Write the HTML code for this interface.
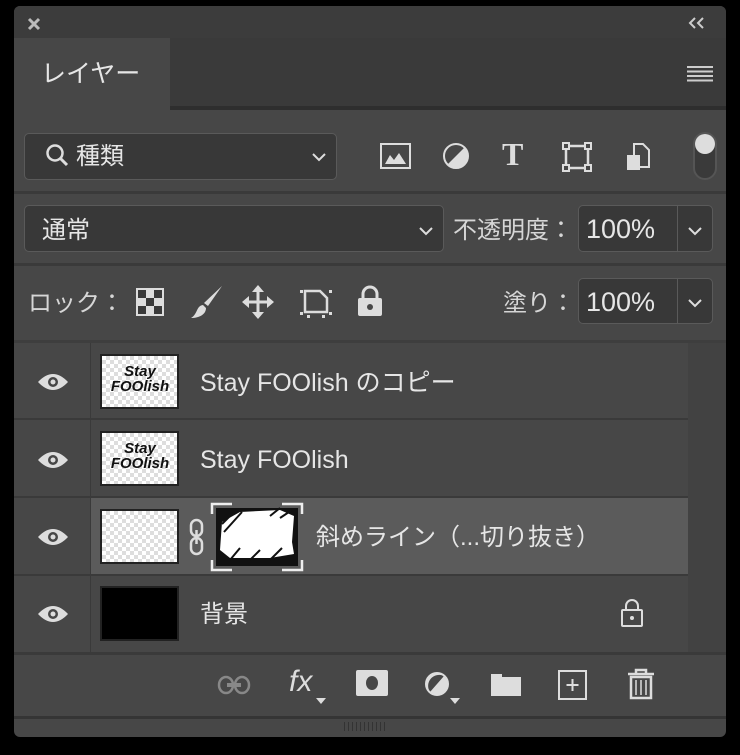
<!DOCTYPE html>
<html><head><meta charset="utf-8"><style>
*{margin:0;padding:0;box-sizing:border-box}
body{width:740px;height:755px;background:#000;position:relative;overflow:hidden;font-family:"Liberation Sans","Noto Sans CJK JP",sans-serif;color:#e6e6e6}
.a{position:absolute}
.box{position:absolute;background:#383838;border:1px solid #5a5a5a;border-radius:5px}
.chk{background-color:#fff;background-image:linear-gradient(45deg,#ddd 25%,transparent 25%,transparent 75%,#ddd 75%),linear-gradient(45deg,#ddd 25%,transparent 25%,transparent 75%,#ddd 75%);background-size:8px 8px;background-position:0 0,4px 4px}
.t{font-size:24px;white-space:nowrap;line-height:1.2}
svg{position:absolute;overflow:visible}
</style></head><body>
<div class="a" style="left:14px;top:6px;width:712px;height:731px;background:#474747;border-radius:6px"></div>
<div class="a" style="left:14px;top:6px;width:712px;height:32px;background:#3c3c3c;border-radius:6px 6px 0 0"></div>
<div class="a" style="left:14px;top:38px;width:712px;height:70px;background:#3a3a3a"></div>
<div class="a" style="left:170px;top:106px;width:556px;height:4px;background:#2e2e2e"></div>
<div class="a" style="left:14px;top:38px;width:156px;height:72px;background:#474747"></div>
<div class="a t" style="left:41px;top:59px;font-size:25px">レイヤー</div>
<svg style="left:27px;top:17px" width="14" height="14"><path d="M2 2L12 12M12 2L2 12" stroke="#bbb" stroke-width="3"/></svg>
<svg style="left:688px;top:17px" width="22" height="12"><path d="M7 1L2 6L7 11M15 1L10 6L15 11" stroke="#ccc" stroke-width="2" fill="none"/></svg>
<svg style="left:687px;top:66px" width="26" height="16"><path d="M0 1H26M0 5.5H26M0 10H26M0 14.5H26" stroke="#ccc" stroke-width="2"/></svg>
<div class="box" style="left:24px;top:133px;width:313px;height:47px"></div>
<svg style="left:45px;top:143px" width="26" height="26"><circle cx="10" cy="10" r="7.5" stroke="#ddd" stroke-width="2.5" fill="none"/><path d="M15 15L22 22" stroke="#ddd" stroke-width="3"/></svg>
<div class="a t" style="left:76px;top:143px">種類</div>
<svg style="left:312px;top:152px" width="14" height="10"><path d="M1 2L7 8L13 2" stroke="#ddd" stroke-width="2" fill="none"/></svg>
<svg style="left:380px;top:143px" width="32" height="27"><rect x="1" y="1" width="29" height="24" stroke="#ddd" stroke-width="2" fill="none"/><path d="M5 21L10 12L14 17L19 10L26 21Z" fill="#ddd"/></svg>
<svg style="left:442px;top:142px" width="28" height="28"><circle cx="14" cy="14" r="12" fill="#ddd"/><path d="M22 6L6 22A11 11 0 0 1 22 6Z" fill="#474747"/><circle cx="14" cy="14" r="12" stroke="#ddd" stroke-width="2" fill="none"/></svg>
<div class="a" style="left:502px;top:136px;font-family:'Liberation Serif',serif;font-weight:bold;font-size:32px;color:#ddd">T</div>
<svg style="left:562px;top:142px" width="30" height="30"><rect x="4" y="4" width="22" height="22" stroke="#ddd" stroke-width="2.5" fill="none"/><g fill="#474747" stroke="#ddd" stroke-width="2"><rect x="1" y="1" width="6" height="6"/><rect x="23" y="1" width="6" height="6"/><rect x="1" y="23" width="6" height="6"/><rect x="23" y="23" width="6" height="6"/></g></svg>
<svg style="left:625px;top:142px" width="26" height="30"><path d="M9 2H18L24 8V25H9Z" stroke="#ddd" stroke-width="2" fill="none"/><rect x="2" y="13" width="13" height="15" fill="#ddd"/></svg>
<div class="a" style="left:693px;top:132px;width:24px;height:48px;border:2px solid #555;border-radius:12px;background:#3a3a3a"></div>
<div class="a" style="left:695px;top:134px;width:20px;height:20px;border-radius:10px;background:#ddd"></div>
<div class="a" style="left:14px;top:191px;width:712px;height:3px;background:#3a3a3a"></div>
<div class="box" style="left:24px;top:205px;width:420px;height:47px"></div>
<div class="a t" style="left:42px;top:217px">通常</div>
<svg style="left:419px;top:226px" width="14" height="10"><path d="M1 2L7 8L13 2" stroke="#ddd" stroke-width="2" fill="none"/></svg>
<div class="a t" style="left:453px;top:217px;color:#d6d6d6">不透明度：</div>
<div class="box" style="left:578px;top:205px;width:135px;height:47px"></div>
<div class="a" style="left:677px;top:206px;width:1px;height:45px;background:#5a5a5a"></div>
<div class="a t" style="left:586px;top:213px;font-size:27px">100%</div>
<svg style="left:688px;top:226px" width="14" height="10"><path d="M1 2L7 8L13 2" stroke="#ddd" stroke-width="2" fill="none"/></svg>
<div class="a" style="left:14px;top:263px;width:712px;height:3px;background:#3a3a3a"></div>
<div class="a t" style="left:28px;top:290px;color:#d6d6d6">ロック：</div>
<svg style="left:136px;top:288px" width="28" height="28"><rect width="28" height="28" fill="#ddd"/><g fill="#3a3a3a"><rect x="2" y="2" width="8" height="8"/><rect x="18" y="2" width="8" height="8"/><rect x="10" y="10" width="8" height="8"/><rect x="2" y="18" width="8" height="8"/><rect x="18" y="18" width="8" height="8"/></g></svg>
<svg style="left:190px;top:284px" width="36" height="36"><path d="M32 2L18 22L14 19Z" fill="#ddd"/><path d="M13 21C6 22 8 30 1 34C10 34 16 30 16 24Z" fill="#ddd"/></svg>
<svg style="left:242px;top:285px" width="32" height="34"><path d="M16 2V32M2 17H30" stroke="#ddd" stroke-width="3"/><path d="M16 0L10 7H22ZM16 34L10 27H22ZM0 17L7 11V23ZM32 17L25 11V23Z" fill="#ddd"/></svg>
<svg style="left:298px;top:286px" width="36" height="32"><path d="M7 5H22L29 12V26H7Z" stroke="#ddd" stroke-width="2.5" fill="none"/><g fill="#ddd"><rect x="2" y="4" width="3" height="3"/><rect x="31" y="4" width="3" height="3"/><rect x="2" y="26" width="3" height="3"/><rect x="31" y="26" width="3" height="3"/><rect x="9" y="29" width="3" height="3"/><rect x="24" y="29" width="3" height="3"/></g></svg>
<svg style="left:356px;top:285px" width="28" height="32"><path d="M7 14V9A7 7 0 0 1 21 9V14" stroke="#ddd" stroke-width="3" fill="none"/><rect x="2" y="13" width="24" height="18" rx="2" fill="#ddd"/><circle cx="14" cy="22" r="3" fill="#474747"/></svg>
<div class="a t" style="left:503px;top:290px;color:#d6d6d6">塗り：</div>
<div class="box" style="left:578px;top:278px;width:135px;height:46px"></div>
<div class="a" style="left:677px;top:279px;width:1px;height:44px;background:#5a5a5a"></div>
<div class="a t" style="left:586px;top:286px;font-size:27px">100%</div>
<svg style="left:688px;top:298px" width="14" height="10"><path d="M1 2L7 8L13 2" stroke="#ddd" stroke-width="2" fill="none"/></svg>
<div class="a" style="left:14px;top:340px;width:712px;height:3px;background:#3e3e3e"></div>
<div class="a" style="left:688px;top:343px;width:38px;height:309px;background:#424242"></div>
<div class="a" style="left:90px;top:343px;width:1px;height:309px;background:#3a3a3a"></div>
<div class="a" style="left:14px;top:418px;width:674px;height:2px;background:#3a3a3a"></div>
<div class="a" style="left:14px;top:496px;width:674px;height:2px;background:#3a3a3a"></div>
<div class="a" style="left:91px;top:498px;width:597px;height:76px;background:#5b5b5b"></div>
<div class="a" style="left:14px;top:574px;width:674px;height:2px;background:#3a3a3a"></div>
<svg style="left:37px;top:372px" width="32" height="20"><path d="M1 10Q16 -6 31 10Q16 26 1 10Z" fill="#ddd"/><circle cx="16" cy="10" r="5" fill="#474747"/><circle cx="16" cy="10" r="2.5" fill="#ddd"/></svg>
<svg style="left:37px;top:450px" width="32" height="20"><path d="M1 10Q16 -6 31 10Q16 26 1 10Z" fill="#ddd"/><circle cx="16" cy="10" r="5" fill="#474747"/><circle cx="16" cy="10" r="2.5" fill="#ddd"/></svg>
<svg style="left:37px;top:527px" width="32" height="20"><path d="M1 10Q16 -6 31 10Q16 26 1 10Z" fill="#ddd"/><circle cx="16" cy="10" r="5" fill="#474747"/><circle cx="16" cy="10" r="2.5" fill="#ddd"/></svg>
<svg style="left:37px;top:604px" width="32" height="20"><path d="M1 10Q16 -6 31 10Q16 26 1 10Z" fill="#ddd"/><circle cx="16" cy="10" r="5" fill="#474747"/><circle cx="16" cy="10" r="2.5" fill="#ddd"/></svg>
<div class="a chk" style="left:100px;top:354px;width:79px;height:55px;border:2px solid #222"></div>
<div class="a" style="left:110px;top:364px;width:60px;text-align:center;font-style:italic;font-weight:bold;font-size:15px;line-height:15px;color:#111">Stay<br>FOOlish</div>
<div class="a chk" style="left:100px;top:431px;width:79px;height:55px;border:2px solid #222"></div>
<div class="a" style="left:110px;top:441px;width:60px;text-align:center;font-style:italic;font-weight:bold;font-size:15px;line-height:15px;color:#111">Stay<br>FOOlish</div>
<div class="a chk" style="left:100px;top:509px;width:79px;height:55px;border:2px solid #222"></div>
<svg style="left:188px;top:518px" width="18" height="38"><rect x="3" y="2" width="11" height="16" rx="5.5" stroke="#ddd" stroke-width="2.5" fill="none"/><rect x="3" y="20" width="11" height="16" rx="5.5" stroke="#ddd" stroke-width="2.5" fill="none"/><path d="M8.5 12V26" stroke="#ddd" stroke-width="2.5"/></svg>
<svg style="left:210px;top:502px" width="94" height="70"><rect x="6" y="6" width="82" height="58" fill="#111"/><path d="M12 20L30 10L70 8L84 14L82 40L84 52L60 56L20 56L10 48Z" fill="#fff"/><g stroke="#111" stroke-width="2"><path d="M12 22L26 8M14 30L32 10M60 14L70 6M70 16L82 8M20 58L30 46M40 58L50 48M60 58L72 46"/></g><path d="M2 12V2H22M72 2H92V12M2 58V68H22M72 68H92V58" stroke="#eee" stroke-width="2.5" fill="none"/></svg>
<div class="a" style="left:100px;top:586px;width:79px;height:55px;background:#000;border:2px solid #222"></div>
<div class="a t" style="left:200px;top:368px;font-size:25px">Stay FOOlish のコピー</div>
<div class="a t" style="left:200px;top:445px;font-size:25px">Stay FOOlish</div>
<div class="a t" style="left:316px;top:524px">斜めライン（...切り抜き）</div>
<div class="a t" style="left:200px;top:601px">背景</div>
<svg style="left:618px;top:598px" width="28" height="30"><path d="M8 12V8A6 6 0 0 1 20 8V12" stroke="#ddd" stroke-width="2" fill="none"/><rect x="4" y="12" width="20" height="16" rx="1" stroke="#ddd" stroke-width="2" fill="none"/><circle cx="14" cy="20" r="2" fill="#ddd"/></svg>
<div class="a" style="left:14px;top:652px;width:712px;height:3px;background:#3a3a3a"></div>
<svg style="left:217px;top:674px" width="36" height="22"><rect x="2" y="3" width="14" height="16" rx="8" stroke="#888" stroke-width="2.5" fill="none"/><rect x="18" y="3" width="14" height="16" rx="8" stroke="#888" stroke-width="2.5" fill="none"/><path d="M10 11H24" stroke="#888" stroke-width="4"/></svg>
<div class="a" style="left:289px;top:665px;font-style:italic;font-size:30px;color:#ddd">fx</div>
<svg style="left:316px;top:698px" width="10" height="6"><path d="M0 0H10L5 6Z" fill="#ddd"/></svg>
<svg style="left:356px;top:670px" width="32" height="26"><rect width="32" height="26" rx="2" fill="#ddd"/><ellipse cx="16" cy="13" rx="6" ry="7" fill="#474747"/></svg>
<svg style="left:424px;top:670px" width="30" height="30"><circle cx="13" cy="14" r="11" fill="#ddd"/><path d="M20 6L6 22A11 11 0 0 1 20 6Z" fill="#474747"/><circle cx="13" cy="14" r="11" stroke="#ddd" stroke-width="2" fill="none"/></svg>
<svg style="left:450px;top:698px" width="10" height="6"><path d="M0 0H10L5 6Z" fill="#ddd"/></svg>
<svg style="left:490px;top:671px" width="32" height="26"><path d="M1 3H12V6H31V25H1Z" fill="#ddd"/></svg>
<svg style="left:558px;top:670px" width="30" height="30"><rect x="1" y="1" width="27" height="28" stroke="#ddd" stroke-width="2" fill="none"/><path d="M14.5 9V21M8.5 15H20.5" stroke="#ddd" stroke-width="2"/></svg>
<svg style="left:626px;top:668px" width="30" height="32"><path d="M2 6H28M10 6V2H20V6" stroke="#ddd" stroke-width="2.5" fill="none"/><path d="M5 9H25V30H5Z" stroke="#ddd" stroke-width="2.5" fill="none"/><path d="M10 12V27M15 12V27M20 12V27" stroke="#ddd" stroke-width="1.5"/></svg>
<div class="a" style="left:14px;top:716px;width:712px;height:3px;background:#353535"></div>
<div class="a" style="left:344px;top:722px;width:44px;height:9px;background:repeating-linear-gradient(90deg,#333 0 1px,transparent 1px 4px)"></div>
</body></html>
